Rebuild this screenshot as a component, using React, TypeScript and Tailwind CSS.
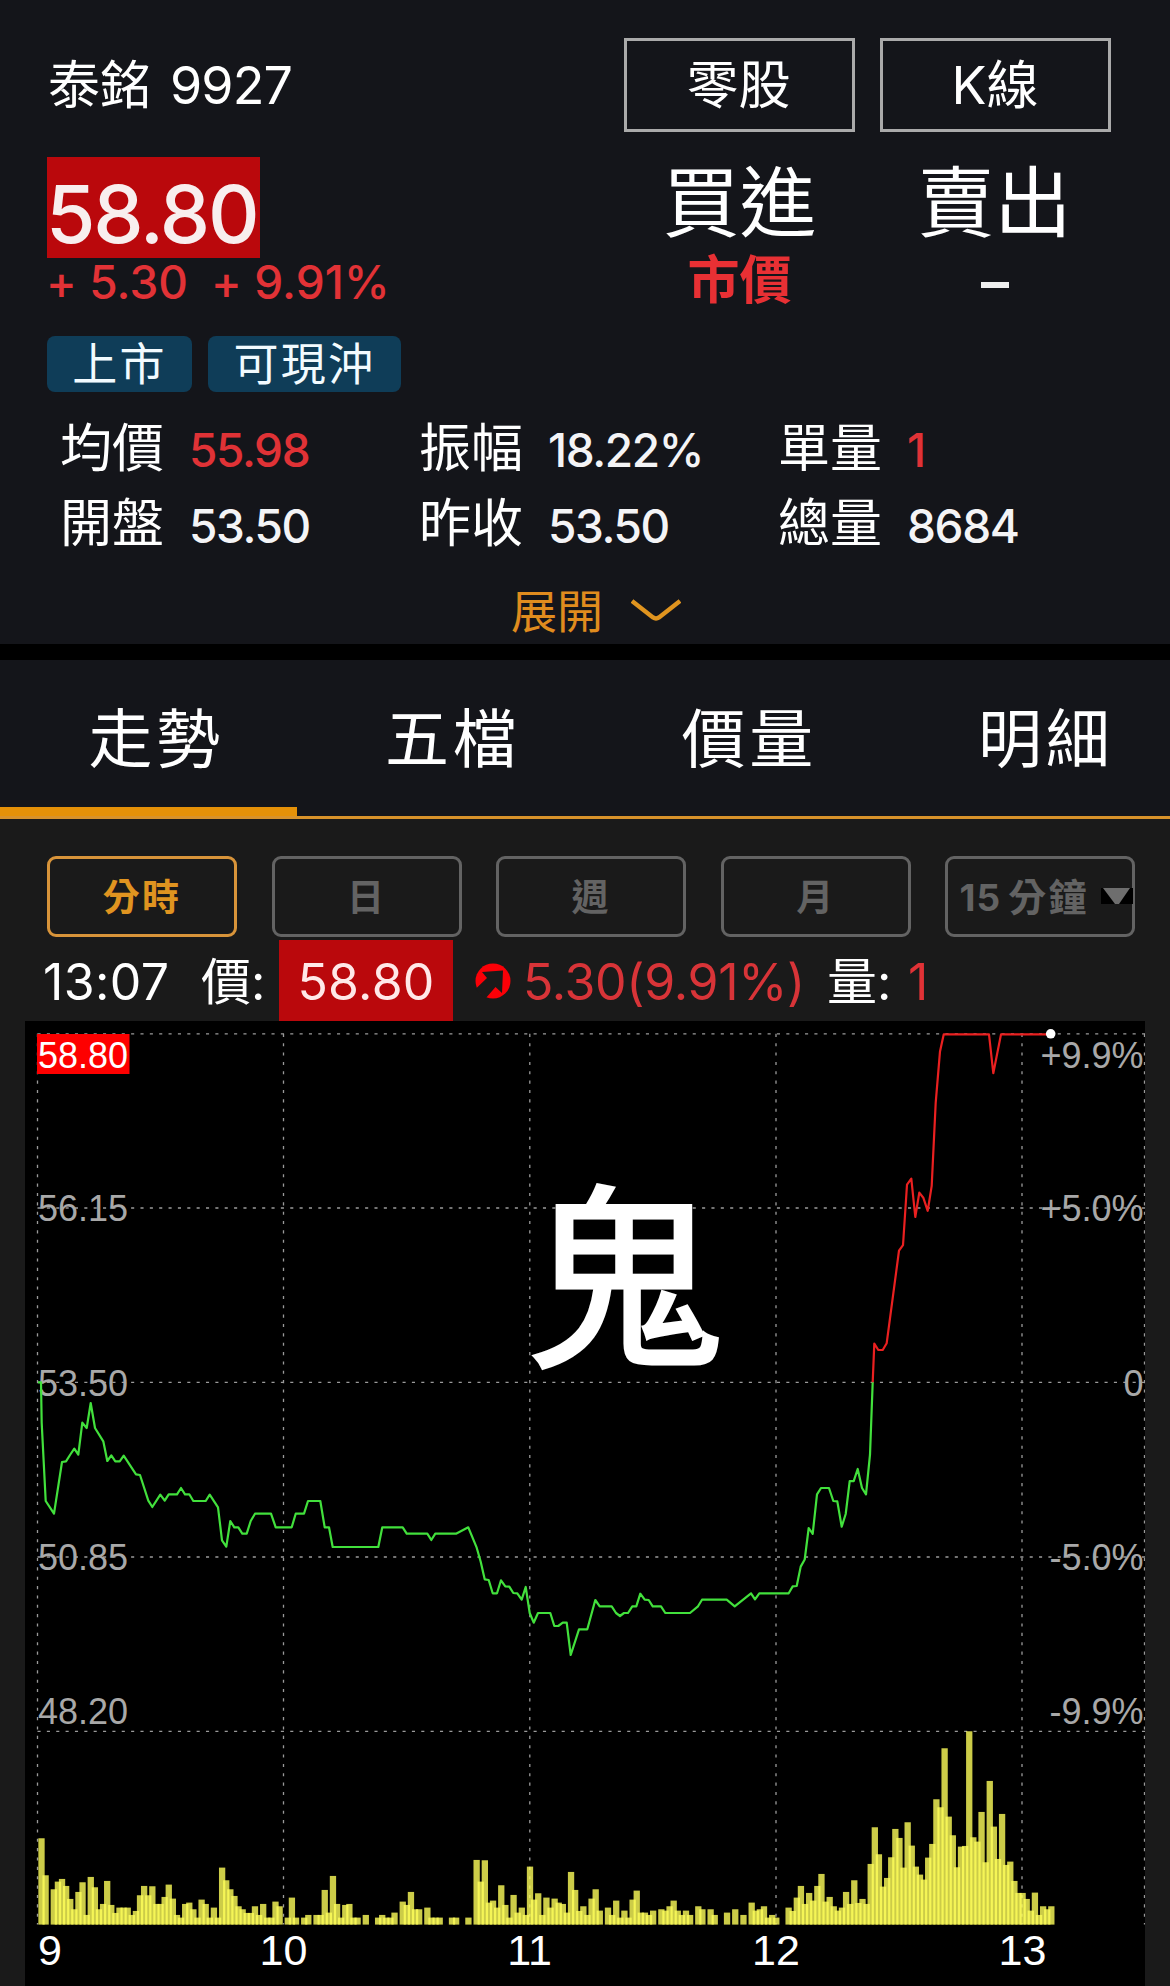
import clsx from "clsx";

type Point = [number, number];

const STATS = [
  { label: "均價", value: "55.98", up: true },
  { label: "振幅", value: "18.22%" },
  { label: "單量", value: "1", up: true },
  { label: "開盤", value: "53.50" },
  { label: "昨收", value: "53.50" },
  { label: "總量", value: "8684" },
];

const TABS = ["走勢", "五檔", "價量", "明細"];

const PERIODS = ["分時", "日", "週", "月"];

const PRICE_LABELS = [
  { price: "58.80", change: "+9.9%", y: 1067.5 },
  { price: "56.15", change: "+5.0%", y: 1221 },
  { price: "53.50", change: "0", y: 1395.5 },
  { price: "50.85", change: "-5.0%", y: 1570 },
  { price: "48.20", change: "-9.9%", y: 1724 },
];

const HOURS = [
  { label: "9", x: 50 },
  { label: "10", x: 283.5 },
  { label: "11", x: 529.5 },
  { label: "12", x: 776 },
  { label: "13", x: 1022.5 },
];

const GRID_X = [37.5, 283.5, 529.8, 776, 1022, 1144.5];
const GRID_Y = [1033.8, 1208, 1382.4, 1557, 1731.3];
const CHART_BOTTOM = 1924.6;
const MINUTE = 4.105;

const BELOW: Point[] = [
  [38, 1382.3], [41, 1382.3], [41.7, 1423], [45.7, 1501], [54, 1513.7], [62, 1462], [66, 1461.3], [70, 1455],
  [74.3, 1448.7], [78.3, 1454.7], [82.3, 1422.7], [86.7, 1428], [90.7, 1403], [95, 1428], [103.3, 1441.3],
  [107.3, 1461], [111.3, 1455.3], [115.3, 1461.3], [119.7, 1461.3], [123.7, 1455.7], [136, 1474.3], [140, 1475],
  [148.3, 1500.7], [152.3, 1507], [160.3, 1494.7], [164.7, 1500.7], [168.7, 1494.3], [177, 1494.3], [181, 1488],
  [185, 1494.3], [189.3, 1494.3], [193.3, 1501], [205.7, 1501], [209.7, 1494.7], [218, 1507.3], [222, 1540.3],
  [226.3, 1546.7], [230.3, 1521], [234.3, 1527.3], [238.3, 1527.3], [242.3, 1533.7], [246.7, 1533.7],
  [250.7, 1521], [255, 1513.7], [271, 1513.7], [275.7, 1527.3], [291.7, 1527.3], [295.7, 1513.7], [304, 1513.7],
  [308, 1501], [320.3, 1501], [324.7, 1527.3], [329, 1527.3], [332.7, 1547], [378.3, 1547], [382.3, 1527.3],
  [402.7, 1527.3], [406.7, 1533.7], [427.3, 1533.7], [431.3, 1540], [435.3, 1533.7], [456, 1533.7],
  [468.3, 1527.3], [476.7, 1547.7], [480.7, 1561.7], [484.7, 1579.3], [488.7, 1580], [492.7, 1593.3],
  [497, 1593.3], [501, 1580.3], [505.3, 1586.3], [509.3, 1586.7], [513.3, 1593], [517.3, 1593.3],
  [521.7, 1599.7], [525.7, 1587], [529.7, 1613], [533.7, 1622.7], [538, 1613], [550.3, 1613], [554.3, 1626],
  [558.3, 1626], [562.7, 1622.7], [566.7, 1622.7], [570.7, 1655], [579, 1629.3], [587.3, 1629.3],
  [595.3, 1600], [599.7, 1606.3], [611.7, 1606.3], [616, 1613], [620, 1616], [624, 1613], [628, 1613],
  [632.3, 1606.3], [636.3, 1606.3], [640.3, 1593.7], [644.7, 1599.7], [648.7, 1600], [652.7, 1606.3],
  [661, 1606.3], [665.3, 1613], [690, 1613], [698, 1606.3], [702, 1599.7], [726.7, 1599.7], [734.7, 1606.3],
  [751, 1593.3], [755, 1599.3], [759.3, 1593.3], [788.7, 1593.3], [792.7, 1586.4], [796.7, 1586],
  [800.7, 1566.6], [804.7, 1559.5], [808.7, 1528], [812.7, 1533.8], [817, 1494.3], [821, 1488], [829, 1488],
  [833.3, 1501], [837.3, 1501.4], [841.7, 1526.7], [845.7, 1514], [849.7, 1481.2], [853.7, 1481.2],
  [857.7, 1469], [862, 1488], [866, 1494.3], [870, 1454.7], [872.7, 1382.3],
];

const ABOVE: Point[] = [
  [872.7, 1382.3], [874.3, 1343.6], [878.3, 1350], [882.7, 1350], [886.7, 1343.2], [899, 1250.7], [903, 1245.2],
  [907, 1184.7], [911.3, 1178.7], [915.3, 1217], [919.3, 1192.6], [923.3, 1197.7], [927.7, 1210.8],
  [931.7, 1185.8], [935.7, 1102.8], [940, 1051.4], [943.7, 1034.4], [989, 1034.4], [993.3, 1073.2],
  [1001, 1034.4], [1050.7, 1034.4],
];

// one entry per minute from 09:01, in thirds of a pixel
const VOLUMES = [
  259, 148, 0, 106, 129, 137, 116, 77, 46, 98, 127, 29, 143, 112, 46, 62, 131, 59, 35, 51,
  51, 51, 29, 41, 88, 116, 88, 115, 62, 62, 83, 120, 78, 29, 21, 62, 66, 46, 21, 75,
  62, 21, 51, 21, 171, 133, 106, 86, 55, 46, 35, 35, 55, 29, 62, 21, 21, 69, 55, 0,
  21, 81, 21, 0, 21, 29, 0, 29, 29, 104, 36, 146, 62, 21, 59, 62, 21, 21, 0, 29,
  0, 0, 21, 29, 21, 21, 36, 0, 69, 59, 98, 46, 46, 0, 51, 21, 21, 21, 0, 0,
  21, 21, 0, 0, 21, 0, 194, 129, 193, 66, 72, 51, 118, 59, 21, 89, 36, 51, 29, 174,
  75, 94, 29, 81, 51, 78, 66, 62, 36, 158, 104, 41, 55, 29, 78, 106, 42, 0, 51, 29,
  72, 21, 42, 21, 75, 102, 36, 36, 29, 42, 0, 46, 42, 55, 72, 42, 29, 42, 29, 0,
  55, 46, 0, 46, 29, 0, 0, 36, 0, 46, 0, 29, 0, 66, 42, 46, 55, 21, 29, 21,
  0, 0, 51, 41, 81, 116, 62, 95, 72, 116, 152, 69, 83, 55, 42, 51, 98, 62, 133, 65,
  77, 62, 182, 292, 211, 114, 140, 202, 287, 260, 171, 307, 237, 174, 150, 135, 201, 242, 376, 352,
  529, 324, 268, 172, 234, 236, 580, 262, 249, 338, 187, 431, 294, 197, 332, 179, 189, 131, 95, 95,
  77, 42, 96, 29, 55, 46, 55,
];

function toPoints(points: Point[]) {
  return points.map(([x, y]) => `${x},${y}`).join(" ");
}

function QuoteHeader() {
  return (
    <header className="h-[644px] bg-[#14151a] pt-[38px]">
      <div className="flex justify-between pr-[59px] pl-[47px]">
        <div>
          <h1 className="flex h-[94px] items-center gap-[18px] pt-[1px] text-[52px] leading-none font-normal">
            <span className="pl-[1px]">泰銘</span>
            <span className="text-[52px] tracking-[-0.018em]">9927</span>
          </h1>
          <div className="mt-[25px] flex h-[101px] w-[213px] items-center bg-[#ba080c] pt-[12px] text-[80px] leading-none font-medium tracking-[-0.027em] text-[#f8eeee]">
            <span className="-ml-[1px]">58.80</span>
          </div>
          <p className="flex h-[48px] items-center gap-[23px] text-[46px] leading-none font-medium tracking-[0.002em] text-[#e23236]">
            <span className="-ml-[1px]">+ 5.30</span>
            <span>+ 9.91%</span>
          </p>
        </div>
        <div className="grid grid-cols-[231px_231px] content-start gap-x-[25px] text-center">
          <button className="h-[94px] border-[3px] border-[#aaaaaa] pt-[2px] pr-[2px] text-[52px] leading-none">
            零股
          </button>
          <button className="h-[94px] border-[3px] border-[#aaaaaa] pt-[2px] pr-[1px] text-[52px] leading-none">
            K線
          </button>
          <span className="mt-[25px] flex h-[92px] items-center justify-center text-[77px] leading-none">買進</span>
          <span className="mt-[25px] flex h-[92px] items-center justify-center pr-[2px] text-[77px] leading-none">
            賣出
          </span>
          <span className="flex h-[64px] items-center justify-center text-[52px] leading-none font-bold text-[#e83034]">
            市價
          </span>
          <span className="flex h-[72px] items-center justify-center pr-[1px]">
            <span className="h-[6px] w-[28px] bg-[#eeeeee]" />
          </span>
        </div>
      </div>
      <div className="mt-[15px] flex gap-[16px] pl-[47px] text-[45px] leading-none text-[#f2fbff]">
        <span className="flex h-[56px] w-[145px] items-center justify-center rounded-[8px] bg-[#0f3d58] pt-[1px] tracking-[0.05em]">
          上市
        </span>
        <span className="flex h-[56px] w-[193px] items-center justify-center rounded-[8px] bg-[#0f3d58] pt-[1px] tracking-[0.05em]">
          可現沖
        </span>
      </div>
      <dl className="mt-[18px] grid grid-cols-[359px_359px_359px] pl-[60px]">
        {STATS.map((stat) => (
          <div key={stat.label} className="flex h-[75.5px] items-center leading-none">
            <dt className="w-[129px] pt-[2px] text-[52px]">{stat.label}</dt>
            <dd
              className={clsx(
                "pt-[5px] text-[46px] font-medium tracking-[-0.03em]",
                stat.up ? "text-[#e03236]" : "text-[#f4f4f6]",
              )}
            >
              {stat.value}
            </dd>
          </div>
        ))}
      </dl>
      <button className="mt-[17px] ml-[511px] flex h-[66px] items-center gap-[28px] text-[46px] leading-none text-[#e08c1e]">
        展開
        <svg className="-mt-[3px] h-[22px] w-[50px]" viewBox="0 0 50 22" fill="none" stroke="#e0941f" strokeWidth="4.4">
          <path d="M1 2 L22 18.4 Q25 20.4 28 18.4 L49 2" />
        </svg>
      </button>
    </header>
  );
}

function TabBar() {
  return (
    <nav className="flex h-[159px] overflow-hidden border-b-[3px] border-[#d8922a] bg-[#14151a]">
      {TABS.map((tab, i) => (
        <div key={tab} className="relative w-[296.5px] shrink-0">
          <div className="flex h-[156px] items-center justify-center pt-[2px] pl-[16px] text-[64px] leading-none tracking-[0.06em]">
            {tab}
          </div>
          {i === 0 && <div className="absolute top-[147px] left-0 h-[9px] w-[297px] bg-[#e59108]" />}
        </div>
      ))}
    </nav>
  );
}

function PeriodBar() {
  return (
    <div className="flex gap-[34.6px] pt-[37px] pl-[47px] text-[37px] leading-none font-bold tracking-[0.06em]">
      {PERIODS.map((period, i) => (
        <button
          key={period}
          className={clsx(
            "h-[81px] w-[190px] shrink-0 rounded-[9px] border-[3px] pt-[1px]",
            i === 0 ? "border-[#d8943a] text-[#e09420]" : "border-[#636363] text-[#636363]",
          )}
        >
          {period}
        </button>
      ))}
      <button className="flex h-[81px] w-[190px] shrink-0 items-center rounded-[9px] border-[3px] border-[#636363] pl-[11px] text-[#636363]">
        <span className="pt-[1px] tracking-[0.03em]">15</span>
        <span className="ml-[7px] pt-[1px] text-[38px]">分鐘</span>
        <svg className="-mt-[2px] ml-[12px] h-[16px] w-[32px] shrink-0" viewBox="0 0 32 16">
          <rect width="32" height="16" fill="#000" />
          <path d="M2 0 H29 L18 16 H14 Z" fill="#6e6e6e" />
        </svg>
      </button>
    </div>
  );
}

function UpArrow() {
  return (
    <svg className="h-[36px] w-[36px]" viewBox="0 0 36 36">
      <circle cx="18" cy="18" r="17.5" fill="#fb0007" />
      <path d="M7 9 L28 7.5 L27 30 L20.5 24 L10.5 35.5 L0.5 26 L12 15 Z" fill="#1a1a1a" />
    </svg>
  );
}

function TickRow() {
  return (
    <div className="mt-[3px] flex h-[81px] items-center pl-[43px] text-[50px] leading-none">
      <span className="w-[158px] pt-[2px] tracking-[0.008em]">13:07</span>
      <span className="w-[78px] pt-[3px] text-[50px]">價:</span>
      <span className="flex h-[81px] w-[174px] items-center justify-center bg-[#ba080c] pt-[2px] tracking-[0.005em] text-[#ffe8e8]">
        58.80
      </span>
      <span className="w-[70px] pl-[22px]">
        <UpArrow />
      </span>
      <span className="w-[304px] pt-[2px] tracking-[-0.006em] text-[#d83438]">5.30(9.91%)</span>
      <span className="w-[81px] pt-[3px] text-[50px]">量:</span>
      <span className="pt-[2px] text-[#e03236]">1</span>
    </div>
  );
}

function PriceChart() {
  return (
    <div className="relative mr-[25px] ml-[25px] h-[965px] bg-black">
      <svg className="block h-[965px] w-[1120px]" viewBox="25 1021 1120 965">
        <g stroke="#9a9a9a" strokeWidth="1.3" strokeDasharray="3.1 6.26">
          {GRID_X.map((x) => (
            <line key={x} x1={x} x2={x} y1={GRID_Y[0]} y2={CHART_BOTTOM} />
          ))}
          {GRID_Y.map((y) => (
            <line key={y} x1={37.5} x2={1145} y1={y} y2={y} />
          ))}
        </g>
        <g fill="#ffff5a" fillOpacity="0.8">
          {VOLUMES.map((v, i) => (
            <rect key={i} x={37.4 + MINUTE * (i + 1) - 3.15} y={CHART_BOTTOM - v / 3} width={6.3} height={v / 3} />
          ))}
        </g>
        <rect x="37" y="1034" width="92.5" height="40" fill="#fe0000" />
        <g fontFamily="Liberation Sans, Arial, sans-serif" fontSize="36" fill="#a8a8a8">
          {PRICE_LABELS.map((row, i) => (
            <g key={row.price}>
              <text x="38" y={row.y} fill={i === 0 ? "#ffffff" : undefined}>
                {row.price}
              </text>
              <text x="1143.5" y={row.y} textAnchor="end">
                {row.change}
              </text>
            </g>
          ))}
        </g>
        <g fontFamily="Liberation Sans, Arial, sans-serif" fontSize="43" fill="#ffffff" textAnchor="middle">
          {HOURS.map((hour) => (
            <text key={hour.label} x={hour.x} y="1965">
              {hour.label}
            </text>
          ))}
        </g>
        <g fill="none" strokeWidth="2.2" strokeLinejoin="round">
          <polyline points={toPoints(BELOW)} stroke="#42e03c" />
          <polyline points={toPoints(ABOVE)} stroke="#ea2020" />
        </g>
        <circle cx="1050.7" cy="1033.8" r="4.8" fill="#ffffff" />
      </svg>
      <div className="absolute top-[161px] left-[502px] text-[196px] leading-none [-webkit-text-stroke:3px_white]">
        鬼
      </div>
    </div>
  );
}

export default function App() {
  return (
    <main className="h-[1986px] w-[1170px] overflow-hidden bg-[#1a1a1a] font-['Inter','Noto_Sans_CJK_TC',sans-serif] whitespace-nowrap text-white">
      <QuoteHeader />
      <div className="h-[16px] bg-black" />
      <TabBar />
      <PeriodBar />
      <TickRow />
      <PriceChart />
    </main>
  );
}
